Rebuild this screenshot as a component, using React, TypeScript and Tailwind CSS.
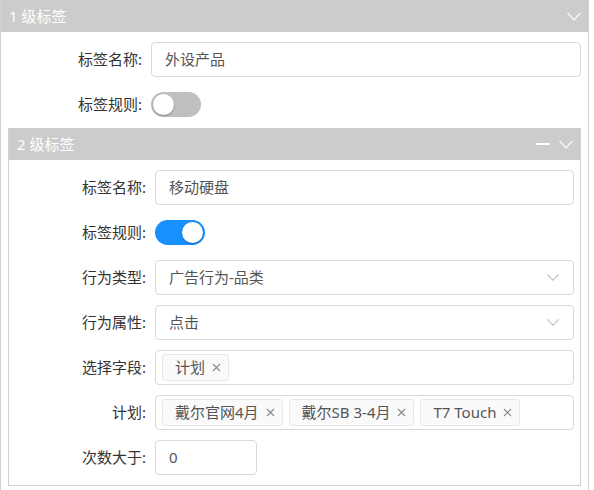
import React from 'react';

const font = { fontFamily: '"Noto Sans", "Noto Sans CJK SC", sans-serif' };

function Chevron({ className }: { className?: string }) {
  return (
    <svg className={className} width="14" height="9" viewBox="0 0 14 9" fill="none">
      <path d="M0.5 0.8 L7 7.8 L13.5 0.8" stroke="currentColor" strokeWidth="1.2" />
    </svg>
  );
}

function Label({ text, w }: { text: string; w: string }) {
  return <div className={`${w} shrink-0 pr-[9px] text-right text-[15px] text-[#333]`}>{text}:</div>;
}

function Input({ value, className }: { value: string; className?: string }) {
  return (
    <div className={`h-[35px] flex items-center rounded border border-[#d9d9d9] bg-white pl-[13px] text-[15px] text-[#555] ${className ?? 'flex-1'}`}>
      {value}
    </div>
  );
}

function Select({ value }: { value: string }) {
  return (
    <div className="h-[35px] flex-1 flex items-center justify-between rounded border border-[#d9d9d9] bg-white pl-[13px] pr-[14px] text-[15px] text-[#555]">
      <span>{value}</span>
      <Chevron className="text-[#bbb] w-[12px]" />
    </div>
  );
}

function Toggle({ on }: { on: boolean }) {
  return (
    <div className="h-[35px] flex items-center">
      <div
        className={`w-[50px] h-[25px] rounded-full flex items-center px-[2px] ${
          on ? 'bg-[#1890ff] justify-end' : 'bg-[#bfbfbf] justify-start'
        }`}
      >
        <div className="w-[21px] h-[21px] rounded-full bg-white shadow-[0_1px_2px_rgba(0,0,0,0.3)]" />
      </div>
    </div>
  );
}

function Tag({ text }: { text: string }) {
  return (
    <div className="h-[27px] flex items-center gap-[7px] rounded-[3px] border border-[#e8e8e8] bg-[#fafafa] pl-[12px] pr-[7px] text-[15px] text-[#555]">
      <span>{text}</span>
      <svg width="9" height="9" viewBox="0 0 9 9">
        <path d="M1 1 L8 8 M8 1 L1 8" stroke="#888" strokeWidth="1.1" />
      </svg>
    </div>
  );
}

function Tags({ items }: { items: string[] }) {
  return (
    <div className="h-[35px] flex-1 flex items-center gap-[6px] rounded border border-[#d9d9d9] bg-white pl-[6px]">
      {items.map((t) => (
        <Tag key={t} text={t} />
      ))}
    </div>
  );
}

function Row({ label, w, children }: { label: string; w: string; children: React.ReactNode }) {
  return (
    <div className="flex items-center">
      <Label text={label} w={w} />
      {children}
    </div>
  );
}

export default function App() {
  return (
    <div className="w-[594px] h-[490px] bg-white overflow-hidden" style={font}>
      <div className="w-[589px] border-x border-[#d0d0d0] min-h-[500px]">
        <div className="h-[32px] bg-[#cccccc] flex items-center justify-between pl-[8px] pr-[7px] text-white text-[15px]">
          <span>1 级标签</span>
          <Chevron />
        </div>
        <div className="pt-[10px] pr-[7px] flex flex-col gap-[10px]">
          <Row label="标签名称" w="w-[150px]">
            <Input value="外设产品" />
          </Row>
          <Row label="标签规则" w="w-[150px]">
            <Toggle on={false} />
          </Row>
        </div>
        <div className="mt-[6px] ml-[7px] mr-[7px] border border-t-0 border-[#d0d0d0]">
          <div className="h-[32px] bg-[#cccccc] flex items-center justify-between pl-[8px] pr-[7px] text-white text-[15px]">
            <span>2 级标签</span>
            <div className="flex items-center gap-[9px]">
              <div className="w-[14px] h-[1.5px] bg-white" />
              <Chevron />
            </div>
          </div>
          <div className="pt-[10px] pb-[10px] pr-[6px] flex flex-col gap-[10px]">
            <Row label="标签名称" w="w-[146px]">
              <Input value="移动硬盘" />
            </Row>
            <Row label="标签规则" w="w-[146px]">
              <Toggle on />
            </Row>
            <Row label="行为类型" w="w-[146px]">
              <Select value="广告行为-品类" />
            </Row>
            <Row label="行为属性" w="w-[146px]">
              <Select value="点击" />
            </Row>
            <Row label="选择字段" w="w-[146px]">
              <Tags items={['计划']} />
            </Row>
            <Row label="计划" w="w-[146px]">
              <Tags items={['戴尔官网4月', '戴尔SB 3-4月', 'T7 Touch']} />
            </Row>
            <Row label="次数大于" w="w-[146px]">
              <Input value="0" className="w-[102px]" />
            </Row>
          </div>
        </div>
      </div>
    </div>
  );
}
